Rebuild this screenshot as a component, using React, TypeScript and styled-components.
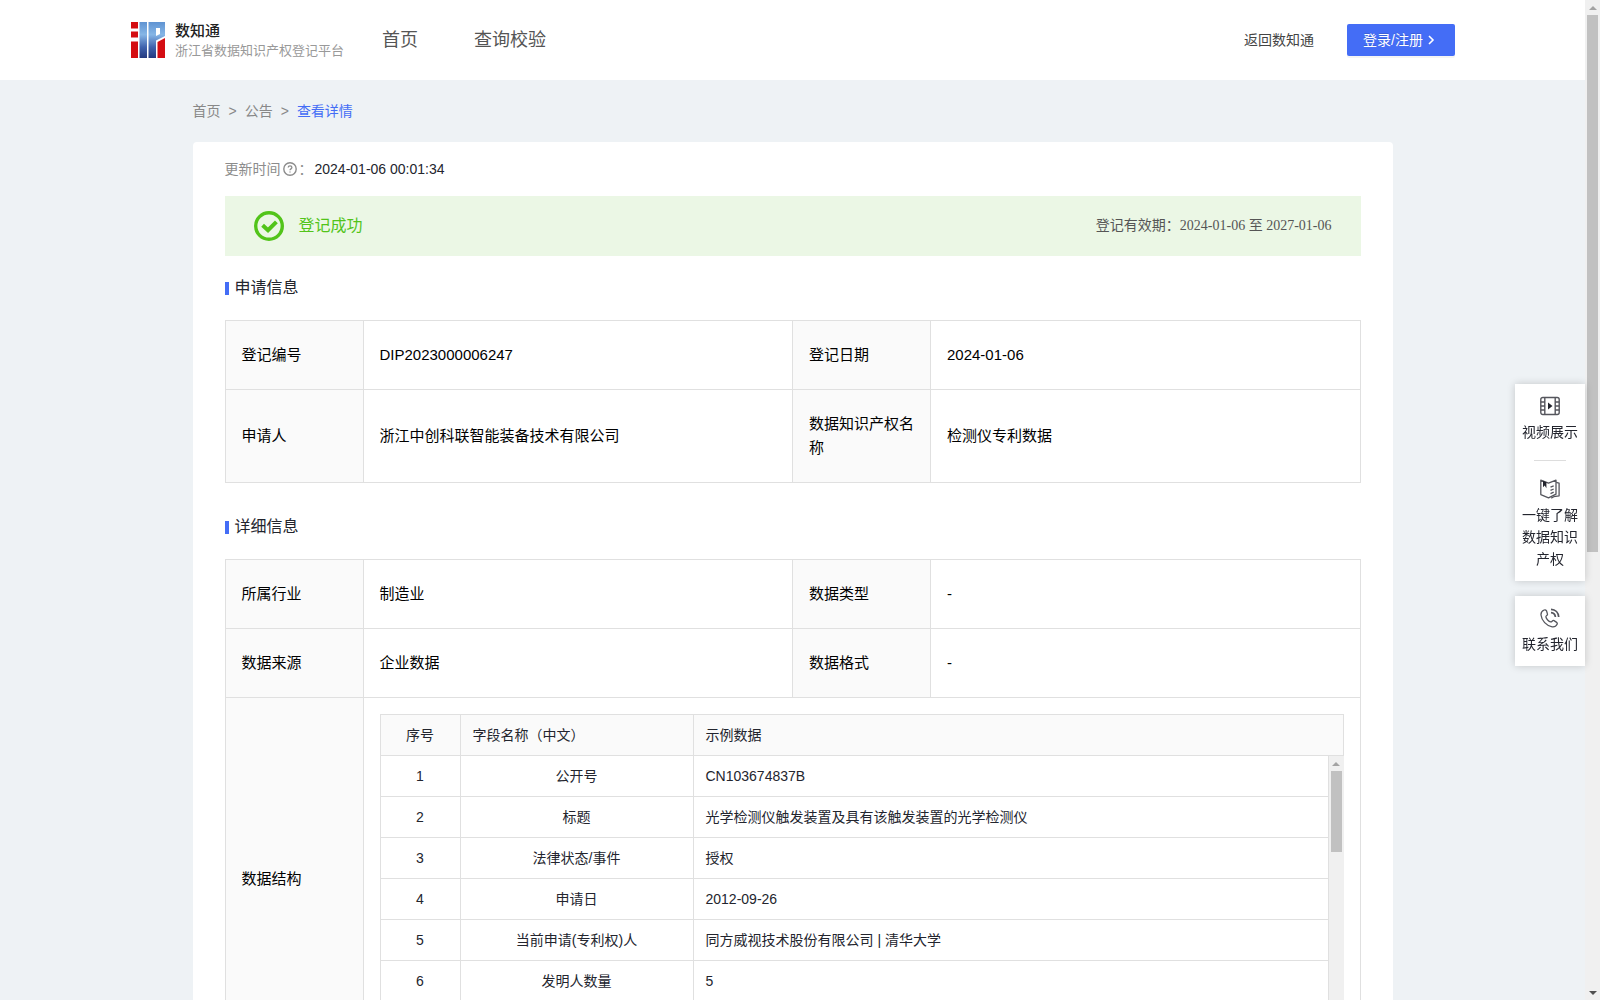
import React from "react";
import styled, { createGlobalStyle } from "styled-components";

const sans = `"Liberation Sans", "Noto Sans CJK SC", sans-serif`;
const serif = `"Liberation Serif", "Noto Sans CJK SC", serif`;
const line = "#e0e0e0";
const blue = "#446df6";

const GlobalStyle = createGlobalStyle`
  *, *::before, *::after { box-sizing: border-box; }
  body { margin: 0; font-family: ${sans}; font-size: 14px; line-height: 22px; color: #23252e; }
  a { color: inherit; text-decoration: none; }
  h2, p { margin: 0; }
`;

const Shell = styled.div`
  display: flex;
  height: 100vh;
  background: #eef2f5;
`;

const Page = styled.div`
  flex: 1;
  min-width: 0;
  overflow-y: auto;
  scrollbar-width: none;
`;

const Track = styled.div`
  flex: none;
  display: flex;
  flex-direction: column;
  align-items: center;
  width: 15px;
  background: #f0f0f0;
`;

const Thumb = styled.div<{ $share: string }>`
  width: 11px;
  height: ${(p) => p.$share};
  background: #c1c1c1;
`;

const ArrowBox = styled.div<{ $down?: boolean }>`
  display: flex;
  align-items: center;
  justify-content: center;
  width: 15px;
  height: 15px;
  margin-top: ${(p) => (p.$down ? "auto" : "0")};
  &::before {
    content: "";
    border: solid transparent;
    border-width: ${(p) => (p.$down ? "4px 4px 0" : "0 4px 4px")};
    border-top-color: ${(p) => (p.$down ? "#505050" : "transparent")};
    border-bottom-color: ${(p) => (p.$down ? "transparent" : "#a3a3a3")};
  }
`;

const Header = styled.header`
  background: #fff;
`;

const HeaderInner = styled.div`
  display: flex;
  align-items: center;
  max-width: 1325px;
  height: 80px;
  margin: 0 auto;
`;

const Brand = styled.a`
  display: flex;
  align-items: center;
  gap: 9px;
  width: 252px;
`;

const BrandText = styled.span`
  display: flex;
  flex-direction: column;
  font-family: "Noto Sans CJK SC", sans-serif;
  line-height: 20px;
`;

const BrandName = styled.strong`
  font-size: 15px;
  font-weight: 500;
  color: #222;
`;

const BrandSub = styled.span`
  font-size: 13px;
  color: #999;
  white-space: nowrap;
`;

const Nav = styled.nav`
  display: flex;
  gap: 56px;
  margin-right: auto;
  font-size: 18px;
  color: #555;
`;

const BackLink = styled.a`
  margin-right: 33px;
  color: #444;
`;

const LoginButton = styled.button`
  display: flex;
  align-items: center;
  gap: 2px;
  height: 32px;
  padding: 0 16px;
  border: 0;
  border-radius: 2px;
  background: ${blue};
  box-shadow: 0 2px 0 rgba(0, 0, 0, 0.045);
  color: #fff;
  font: 14px/22px ${sans};
  text-shadow: 0 -1px 0 rgba(0, 0, 0, 0.12);
`;

const Container = styled.main`
  max-width: 1200px;
  margin: 0 auto;
`;

const Breadcrumb = styled.nav`
  display: flex;
  align-items: center;
  gap: 8px;
  height: 62px;
  color: #888;
`;

const Current = styled.span`
  color: ${blue};
`;

const Card = styled.article`
  padding: 16px 32px;
  border-radius: 4px;
  background: #fff;
`;

const Updated = styled.p`
  display: flex;
  align-items: center;
  margin-bottom: 16px;
`;

const UpdatedLabel = styled.span`
  display: flex;
  align-items: center;
  gap: 2px;
  width: 90px;
  color: #8c8c8c;
`;

const Banner = styled.div`
  display: flex;
  align-items: center;
  height: 60px;
  margin-bottom: 20px;
  padding: 0 29px;
  background: #ebf7e5;
`;

const BannerStatus = styled.span`
  margin: 0 auto 0 15px;
  font-size: 16px;
  color: #52c41a;
`;

const BannerPeriod = styled.span`
  font-family: ${serif};
  color: #555;
`;

const Section = styled.section`
  margin-bottom: 32px;
`;

const Title = styled.h2`
  display: flex;
  align-items: center;
  gap: 6px;
  margin-bottom: 20px;
  font-size: 16px;
  font-weight: 400;
  line-height: 24px;
  &::before {
    content: "";
    width: 4px;
    height: 13px;
    background: ${blue};
  }
`;

const InfoTable = styled.table`
  width: 100%;
  table-layout: fixed;
  border-collapse: collapse;
  font-size: 15px;
  line-height: 24px;
  color: #000;
`;

const Label = styled.th`
  width: 138px;
  padding: 22px 16px;
  border: 1px solid ${line};
  background: #fafafa;
  font-weight: 400;
  text-align: left;
`;

const Value = styled.td`
  padding: 22px 16px;
  border: 1px solid ${line};
`;

const NestedValue = styled.td`
  padding: 16px;
  border: 1px solid ${line};
`;

const FieldTable = styled.table`
  width: 100%;
  table-layout: fixed;
  border-collapse: separate;
  border-spacing: 0;
  border-left: 1px solid ${line};
  font-size: 14px;
  line-height: 22px;
  color: #23252e;
`;

const HeadCell = styled.th<{ $width?: number; $center?: boolean }>`
  width: ${(p) => (p.$width ? `${p.$width}px` : "auto")};
  padding: 9px 12px;
  border: solid ${line};
  border-width: 1px 1px 1px 0;
  background: #fafafa;
  font-weight: 400;
  text-align: ${(p) => (p.$center ? "center" : "left")};
`;

const Cell = styled.td<{ $width?: number; $center?: boolean }>`
  width: ${(p) => (p.$width ? `${p.$width}px` : "auto")};
  padding: 9px 12px;
  border: solid ${line};
  border-width: 0 1px 1px 0;
  text-align: ${(p) => (p.$center ? "center" : "left")};
`;

const FieldBody = styled.div`
  display: flex;
  height: 288px;
`;

const FieldScroll = styled.div`
  flex: 1;
  overflow-y: auto;
  scrollbar-width: none;
`;

const Dock = styled.aside`
  position: fixed;
  top: 384px;
  right: 15px;
  display: flex;
  flex-direction: column;
  gap: 15px;
  width: 70px;
`;

const DockPanel = styled.div`
  display: flex;
  flex-direction: column;
  align-items: center;
  padding: 12px 7px 11px;
  background: #fff;
  box-shadow: 0 0 8px rgba(0, 0, 0, 0.18);
`;

const DockItem = styled.a`
  display: flex;
  flex-direction: column;
  align-items: center;
  gap: 5px;
  text-align: center;
`;

const DockRule = styled.hr`
  width: 32px;
  height: 1px;
  margin: 17px 0 18px;
  border: 0;
  background: #ddd;
`;

const Logo = () => (
  <svg width="36" height="36" viewBox="0 0 36 36" aria-hidden="true">
    <defs>
      <linearGradient id="logoBlue" gradientUnits="userSpaceOnUse" x1="0" y1="0" x2="0" y2="36">
        <stop offset="0" stopColor="#5f93d2" />
        <stop offset="0.35" stopColor="#86b6e6" />
        <stop offset="0.7" stopColor="#3f62ad" />
        <stop offset="1" stopColor="#24397f" />
      </linearGradient>
    </defs>
    <path d="M1 0h7v6.500H1zM1 9.500h7v6H1zM1 19.500h7V36H1z" fill="#d40d12" />
    <path d="M9.500 0H17v36H9.500zM18.500 0H35v14l-9 4.500V36h-7.500zM26 6v8l4-2V6z" fill="url(#logoBlue)" fillRule="evenodd" />
    <path d="M27.500 20l7.500-4v20h-7.500z" fill="#d40d12" />
  </svg>
);

const HelpIcon = () => (
  <svg width="14" height="14" viewBox="0 0 14 14" fill="none" stroke="#8c8c8c" aria-hidden="true">
    <circle cx="7" cy="7" r="6.200" strokeWidth="1.400" />
    <path d="M5.200 5.600c0-2.300 3.700-2.300 3.700 0C8.900 6.900 7 6.900 7 8.300M7 9.400v1.200" strokeWidth="1.300" />
  </svg>
);

const SuccessIcon = () => (
  <svg width="30" height="30" viewBox="0 0 30 30" fill="none" stroke="#52c41a" aria-hidden="true">
    <circle cx="15" cy="15" r="13.300" strokeWidth="3.400" />
    <path d="M8.600 14.200l5.400 5 8.400-8.400" strokeWidth="4" />
  </svg>
);

const Chevron = () => (
  <svg width="14" height="14" viewBox="0 0 14 14" fill="none" stroke="#fff" strokeWidth="1.600" aria-hidden="true">
    <path d="M4 3l4 4-4 4" />
  </svg>
);

const VideoIcon = () => (
  <svg width="20" height="20" viewBox="0 0 20 20" fill="none" stroke="#55565d" strokeWidth="1.400" aria-hidden="true">
    <rect x="0.800" y="1.500" width="18.400" height="17" rx="2" />
    <path d="M4.800 1.500v17M15.200 1.500v17M0.800 6h4M0.800 10h4M0.800 14h4M15.200 6h4M15.200 10h4M15.200 14h4" />
    <path d="M8 6.600l4.500 3.400L8 13.400z" fill="#23252e" stroke="none" />
  </svg>
);

const BookIcon = () => (
  <svg width="20" height="20" viewBox="0 0 20 20" fill="none" stroke="#55565d" strokeWidth="1.300" strokeLinejoin="round" aria-hidden="true">
    <path d="M0.800 1.200l7.700 3 7.500-3v14l-7.500 3.600-7.700-3.200z" />
    <path d="M16.200 3.400l2.900.8v12.600l-5.300.9-2.600 1.400" />
    <path d="M3 1.800v6.400l1.700-1.600 1.700 2.600V3.200z" fill="#23252e" stroke="none" />
    <path d="M10.500 8.200l3.200-1.400M10.500 11.400l3.200-1.400M10.500 14.600l3.200-1.400" />
  </svg>
);

const PhoneIcon = () => (
  <svg width="20" height="20" viewBox="0 0 20 20" fill="none" stroke="#55565d" strokeWidth="1.300" aria-hidden="true">
    <path d="M4.200 2c-2 .8-3.400 2.600-3.200 5 .6 5.600 5.400 10.900 11.200 11.900 2.300.3 4-.8 4.900-2.600.5-1-.1-1.700-.8-2.200l-2.300-1.500c-1.500-.8-2 1.500-3.300 1.300-2-.5-4.500-3.100-4.800-5-.1-1.300 2.200-1.600 1.500-3.200L6.500 2.800C6 2 5.200 1.600 4.200 2z" />
    <path d="M11 1.300c4.400.2 7.500 3.300 7.700 7.700M11 4.600c2.500.2 4.200 1.900 4.400 4.400" strokeWidth="1.700" />
  </svg>
);

const fields = [
  ["公开号", "CN103674837B"],
  ["标题", "光学检测仪触发装置及具有该触发装置的光学检测仪"],
  ["法律状态/事件", "授权"],
  ["申请日", "2012-09-26"],
  ["当前申请(专利权)人", "同方威视技术股份有限公司 | 清华大学"],
  ["发明人数量", "5"],
];

function InfoRow({ items }: { items: [string, string][] }) {
  return (
    <tr>
      {items.map(([name, value]) => (
        <React.Fragment key={name}>
          <Label scope="row">{name}</Label>
          <Value>{value}</Value>
        </React.Fragment>
      ))}
    </tr>
  );
}

export default function App() {
  return (
    <Shell>
      <GlobalStyle />
      <Page>
        <Header>
          <HeaderInner>
            <Brand href="#">
              <Logo />
              <BrandText>
                <BrandName>数知通</BrandName>
                <BrandSub>浙江省数据知识产权登记平台</BrandSub>
              </BrandText>
            </Brand>
            <Nav>
              <a href="#">首页</a>
              <a href="#">查询校验</a>
            </Nav>
            <BackLink href="#">返回数知通</BackLink>
            <LoginButton type="button">
              登录/注册
              <Chevron />
            </LoginButton>
          </HeaderInner>
        </Header>
        <Container>
          <Breadcrumb>
            <a href="#">首页</a>
            <span>&gt;</span>
            <a href="#">公告</a>
            <span>&gt;</span>
            <Current>查看详情</Current>
          </Breadcrumb>
          <Card>
            <Updated>
              <UpdatedLabel>
                更新时间
                <HelpIcon />：
              </UpdatedLabel>
              <time>2024-01-06 00:01:34</time>
            </Updated>
            <Banner>
              <SuccessIcon />
              <BannerStatus>登记成功</BannerStatus>
              <BannerPeriod>登记有效期：2024-01-06 至 2027-01-06</BannerPeriod>
            </Banner>
            <Section>
              <Title>申请信息</Title>
              <InfoTable>
                <tbody>
                  <InfoRow items={[["登记编号", "DIP2023000006247"], ["登记日期", "2024-01-06"]]} />
                  <InfoRow items={[["申请人", "浙江中创科联智能装备技术有限公司"], ["数据知识产权名称", "检测仪专利数据"]]} />
                </tbody>
              </InfoTable>
            </Section>
            <Section>
              <Title>详细信息</Title>
              <InfoTable>
                <tbody>
                  <InfoRow items={[["所属行业", "制造业"], ["数据类型", "-"]]} />
                  <InfoRow items={[["数据来源", "企业数据"], ["数据格式", "-"]]} />
                  <tr>
                    <Label scope="row">数据结构</Label>
                    <NestedValue colSpan={3}>
                      <FieldTable>
                        <thead>
                          <tr>
                            <HeadCell $width={80} $center>序号</HeadCell>
                            <HeadCell $width={233}>字段名称（中文）</HeadCell>
                            <HeadCell>示例数据</HeadCell>
                          </tr>
                        </thead>
                      </FieldTable>
                      <FieldBody>
                        <FieldScroll>
                          <FieldTable>
                            <tbody>
                              {fields.map(([name, sample], i) => (
                                <tr key={name}>
                                  <Cell $width={80} $center>{i + 1}</Cell>
                                  <Cell $width={233} $center>{name}</Cell>
                                  <Cell>{sample}</Cell>
                                </tr>
                              ))}
                            </tbody>
                          </FieldTable>
                        </FieldScroll>
                        <Track>
                          <ArrowBox />
                          <Thumb $share="28%" />
                          <ArrowBox $down />
                        </Track>
                      </FieldBody>
                    </NestedValue>
                  </tr>
                </tbody>
              </InfoTable>
            </Section>
          </Card>
        </Container>
      </Page>
      <Track>
        <ArrowBox />
        <Thumb $share="53.7%" />
        <ArrowBox $down />
      </Track>
      <Dock>
        <DockPanel>
          <DockItem href="#">
            <VideoIcon />
            视频展示
          </DockItem>
          <DockRule />
          <DockItem href="#">
            <BookIcon />
            一键了解数据知识产权
          </DockItem>
        </DockPanel>
        <DockPanel>
          <DockItem href="#">
            <PhoneIcon />
            联系我们
          </DockItem>
        </DockPanel>
      </Dock>
    </Shell>
  );
}
